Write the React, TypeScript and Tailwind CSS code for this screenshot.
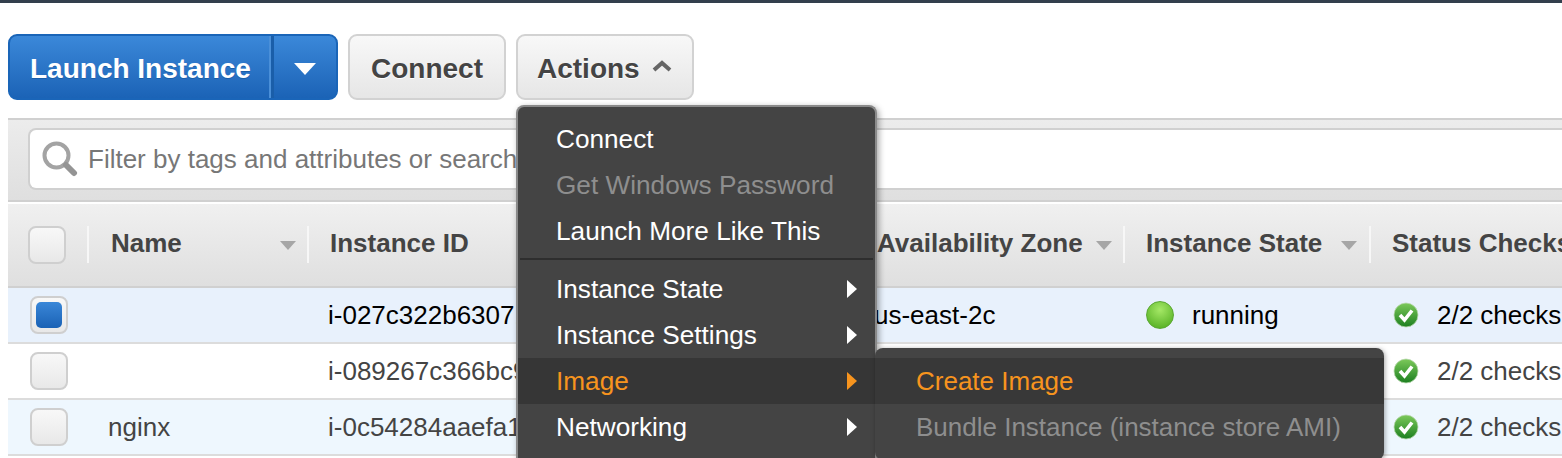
import React from "react";

const Caret = ({ className = "" }: { className?: string }) => (
  <svg width="16" height="9" viewBox="0 0 16 9" className={`shrink-0 ${className}`}>
    <path d="M0 0H16L8 9Z" fill="currentColor" />
  </svg>
);

const Arrow = () => (
  <svg width="10" height="18" viewBox="0 0 10 18" className="absolute left-[329px] top-[14px]">
    <path d="M0 0L10 9L0 18Z" fill="currentColor" />
  </svg>
);

const Check = () => (
  <svg width="26" height="26" viewBox="0 0 26 26" className="shrink-0">
    <defs>
      <linearGradient id="chk" x1="0" y1="0" x2="0" y2="1">
        <stop offset="0" stopColor="#7cc95a" />
        <stop offset="1" stopColor="#1c7f20" />
      </linearGradient>
    </defs>
    <circle cx="13" cy="13" r="12" fill="url(#chk)" stroke="#b9d8ae" strokeWidth="0.8" />
    <path d="M7 13L11.5 18L19 8.5" fill="none" stroke="#fff" strokeWidth="3.6" />
  </svg>
);

const Box = ({ on = false }: { on?: boolean }) => (
  <div className="flex h-[38px] w-[38px] items-center justify-center rounded-[8px] border-2 border-[#cfcfcf] bg-gradient-to-b from-[#f8f8f8] to-[#e8e8e8]">
    {on && <div className="h-[26px] w-[26px] rounded-[5px] bg-gradient-to-b from-[#3a87d8] to-[#1a62b5]" />}
  </div>
);

const HeadCell = ({ w, label, caretGap, pad = "pl-[23px]" }: { w: string; label: string; caretGap?: string; pad?: string }) => (
  <div className={`relative flex h-full shrink-0 items-center ${w}`}>
    <div className="absolute left-0 top-[22px] h-[37px] w-[2px] bg-[#f7f7f7]" />
    <span className={`${pad} whitespace-nowrap pb-[3px]`}>{label}</span>
    {caretGap && <Caret className={`${caretGap} text-[#a6a6a6]`} />}
  </div>
);

const Row = ({
  bg,
  box,
  name,
  id,
  zone,
  state,
  dark,
}: {
  bg: string;
  box?: boolean;
  name?: string;
  id: string;
  zone?: string;
  state?: boolean;
  dark?: boolean;
}) => (
  <div className={`flex h-[56px] items-center border-b-2 border-[#dcdcdc] text-[26px] ${bg} ${dark ? "text-black" : "text-[#444444]"}`}>
    <div className="flex w-[81px] shrink-0 justify-center">
      <Box on={box} />
    </div>
    <div className="w-[239px] shrink-0 pl-[19px]">{name}</div>
    <div className="w-[546px] shrink-0 whitespace-nowrap">{id}</div>
    <div className="w-[272px] shrink-0 whitespace-nowrap">{zone}</div>
    <div className="flex w-[247px] shrink-0 items-center">
      {state && (
        <>
          <div className="h-[28px] w-[28px] rounded-full border border-[#5aa832] bg-[radial-gradient(circle_at_50%_30%,#a5e866,#4aa81a)]" />
          <span className="ml-[18px]">running</span>
        </>
      )}
    </div>
    <div className="flex items-center gap-[18px] whitespace-nowrap">
      <Check />
      <span>2/2 checks</span>
    </div>
  </div>
);

const Item = ({ label, tone = "text-white", arrow = false, active = false }: { label: string; tone?: string; arrow?: boolean; active?: boolean }) => (
  <div className={`relative flex h-[46px] items-center pl-[38px] pt-[2px] whitespace-nowrap ${tone} ${active ? "bg-[#363636]" : ""}`}>
    {label}
    {arrow && <Arrow />}
  </div>
);

export default function App() {
  return (
    <div className="relative h-[458px] w-[1562px] overflow-hidden bg-white font-['Liberation_Sans',Arial,sans-serif]">
      <div className="h-[3px] bg-[#333f4d]" />
      <div className="flex gap-[10px] pl-[8px] pt-[31px]">
        <div className="flex h-[66px] w-[330px] items-center rounded-[9px] border-2 border-[#1a65b8] bg-gradient-to-b from-[#3b88d9] to-[#1b63b6] font-bold text-white">
          <div className="flex h-full w-[261px] items-center border-r-2 border-[#4a8fd8] pl-[20px] pt-[3px] text-[28px] [text-shadow:0_1px_0_#1a5ea9]">Launch Instance</div>
          <div className="h-full w-[3px] bg-[#1a5ea9]" />
          <div className="flex flex-1 justify-center pt-[3px]">
            <svg width="22" height="12" viewBox="0 0 22 12">
              <path d="M0 0H22L11 12Z" fill="#fff" />
            </svg>
          </div>
        </div>
        <div className="flex h-[66px] w-[158px] items-center justify-center rounded-[9px] border-2 border-[#d2d2d2] bg-gradient-to-b from-[#f8f8f8] to-[#e6e6e6] pt-[3px] text-[28px] font-bold text-[#444444] [text-shadow:0_1px_0_#fff]">
          Connect
        </div>
        <div className="flex h-[66px] w-[178px] items-center rounded-[9px] border-2 border-[#d2d2d2] bg-gradient-to-b from-[#f8f8f8] to-[#e6e6e6] pl-[19px] pt-[3px] text-[28px] font-bold text-[#444444] [text-shadow:0_1px_0_#fff]">
          Actions
          <svg width="20" height="12" viewBox="0 0 20 12" className="ml-[12px] -mt-[6px]">
            <path d="M2 10L10 3L18 10" fill="none" stroke="#666666" strokeWidth="4" />
          </svg>
        </div>
      </div>

      <div className="ml-[8px] mt-[18px] border-y-2 border-[#d0d0d0] bg-gradient-to-b from-[#ececec] to-[#dfdfdf] pb-[10px] pt-[8px]">
        <div className="ml-[20px] flex h-[62px] items-center rounded-l-[8px] border-2 border-r-0 border-[#d0d0d0] bg-white pl-[12px] text-[26px] text-[#777777]">
          <svg width="36" height="36" viewBox="0 0 36 36" className="shrink-0">
            <circle cx="14.5" cy="14.5" r="12" fill="none" stroke="#a3a3a3" strokeWidth="4" />
            <path d="M24 24L32 32" stroke="#949494" strokeWidth="6" strokeLinecap="round" />
          </svg>
          <span className="ml-[10px]">Filter by tags and attributes or search</span>
        </div>
      </div>

      <div className="ml-[8px]">
        <div className="mt-[2px] flex h-[84px] items-center border-b-2 border-[#d0d0d0] bg-gradient-to-b from-[#f0f0f0] to-[#dfdfdf] text-[26px] font-bold text-[#444444]">
          <div className="flex w-[79px] shrink-0 items-center justify-center pr-[1px]">
            <Box />
          </div>
          <HeadCell w="w-[220px]" label="Name" pad="pl-[24px]" caretGap="ml-[98px]" />
          <HeadCell w="w-[548px]" label="Instance ID" />
          <HeadCell w="w-[268px]" label="Availability Zone" pad="pl-[22px]" caretGap="ml-[13px]" />
          <HeadCell w="w-[246px]" label="Instance State" caretGap="ml-[19px]" />
          <HeadCell w="w-[200px]" label="Status Checks" />
        </div>
        <Row bg="bg-[#e8f1fc]" box id="i-027c322b63071" zone="us-east-2c" state dark />
        <Row bg="bg-white" id="i-089267c366bc9" />
        <Row bg="bg-[#eef7fe]" name="nginx" id="i-0c54284aaefa1" />
      </div>

      <div className="absolute left-[516px] top-[105px] h-[370px] w-[361px] rounded-[8px] border-2 border-b-0 border-[#8a8a8a] bg-[#444444] pt-[9px] text-[26.2px] shadow-[2px_2px_6px_rgba(0,0,0,0.35)]">
        <Item label="Connect" />
        <Item label="Get Windows Password" tone="text-[#8e8e8e]" />
        <Item label="Launch More Like This" />
        <div className="mx-[2px] mb-[6px] mt-[4px] h-[2px] bg-[#2e2e2e]" />
        <Item label="Instance State" arrow />
        <Item label="Instance Settings" arrow />
        <Item label="Image" tone="text-[#f7941e]" arrow active />
        <Item label="Networking" arrow />
      </div>

      <div className="absolute left-[875px] top-[348px] h-[112px] w-[509px] rounded-[8px] bg-[#444444] pt-[10px] text-[26px] shadow-[1px_1px_5px_rgba(0,0,0,0.35)]">
        <div className="flex h-[46px] items-center bg-[#383838] pl-[41px] text-[#f7941e]">Create Image</div>
        <div className="flex h-[46px] items-center pl-[41px] text-[#8e8e8e]">Bundle Instance (instance store AMI)</div>
      </div>
    </div>
  );
}
